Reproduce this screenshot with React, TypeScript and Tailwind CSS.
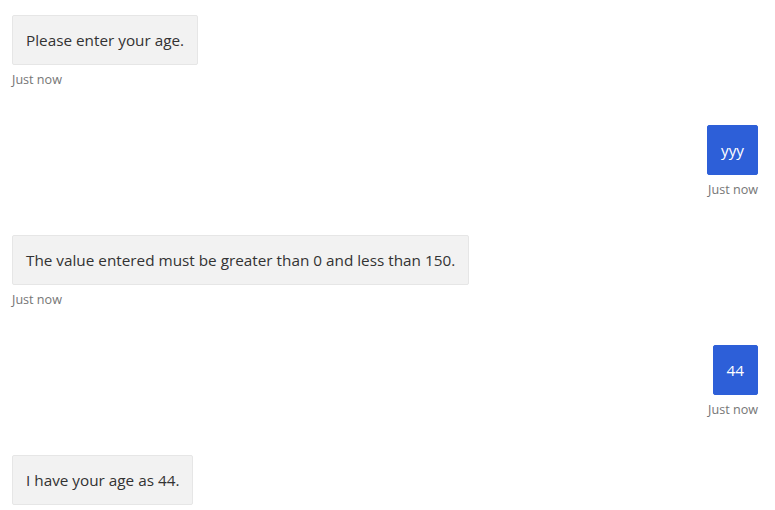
const messages: { from: 'bot' | 'user'; text: string }[] = [
  { from: 'bot', text: 'Please enter your age.' },
  { from: 'user', text: 'yyy' },
  { from: 'bot', text: 'The value entered must be greater than 0 and less than 150.' },
  { from: 'user', text: '44' },
  { from: 'bot', text: 'I have your age as 44.' },
];

function Bubble({ from, text }: { from: 'bot' | 'user'; text: string }) {
  const isUser = from === 'user';
  return (
    <div className={`flex flex-col ${isUser ? 'items-end' : 'items-start'}`}>
      <div
        className={
          isUser
            ? 'rounded-[2px] border border-[#2d5fd8] bg-[#2d5fd8] px-[13px] py-[14px] text-[15.3px] leading-[20px] text-white'
            : 'rounded-[2px] border border-[#e6e6e6] bg-[#f2f2f2] px-[13px] py-[14px] text-[15.3px] leading-[20px] text-[#333333]'
        }
      >
        {text}
      </div>
      <div className="mt-[7px] text-[12.6px] leading-[16px] text-[#767676]">Just now</div>
    </div>
  );
}

export default function App() {
  return (
    <div
      className="flex h-[510px] w-full flex-col gap-[37px] overflow-hidden bg-white pl-[12px] pr-[17px] pt-[15px]"
      style={{ fontFamily: '"Open Sans", "Noto Sans", sans-serif' }}
    >
      {messages.map((m, i) => (
        <Bubble key={i} from={m.from} text={m.text} />
      ))}
    </div>
  );
}
